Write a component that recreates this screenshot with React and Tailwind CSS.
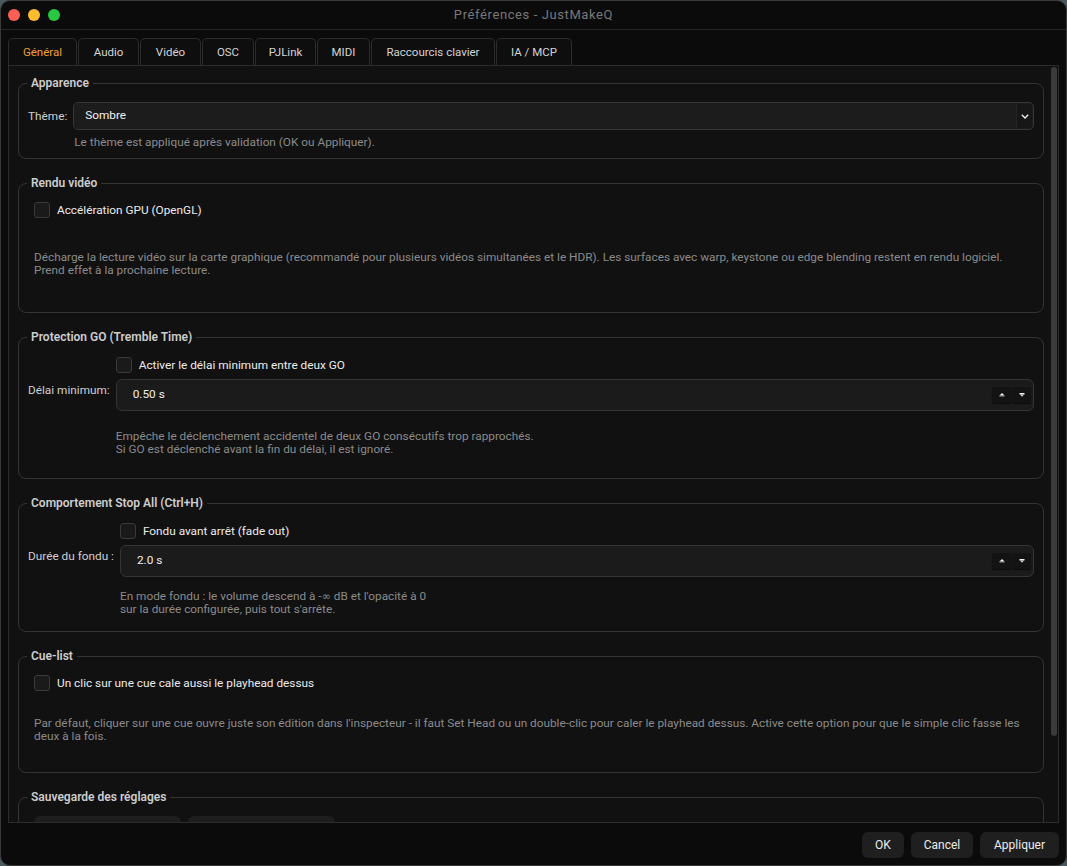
const tabs = [
  { label: "Général", w: "w-[69px]", active: true },
  { label: "Audio", w: "w-[61px]" },
  { label: "Vidéo", w: "w-[61px]" },
  { label: "OSC", w: "w-[52px]" },
  { label: "PJLink", w: "w-[61px]" },
  { label: "MIDI", w: "w-[53px]" },
  { label: "Raccourcis clavier", w: "w-[124px]" },
  { label: "IA / MCP", w: "w-[76px]" },
];

function Group({ title, className = "", children }) {
  return (
    <fieldset className={`border border-[#343434] rounded-[8px] px-[9px] ${className}`}>
      <legend className="-ml-px px-[4px] text-[12px] leading-[14px] font-semibold text-[#cdcdcd]">
        {title}
      </legend>
      {children}
    </fieldset>
  );
}

function Check({ label }) {
  return (
    <div className="flex items-center h-[18px] gap-[7px]">
      <span className="w-[16px] h-[16px] rounded-[3px] border border-[#3a3a3a] bg-[#1a1a1a]" />
      <span className="text-[11.8px] leading-[13px] text-[#ececec]">{label}</span>
    </div>
  );
}

function Hint({ children, className = "" }) {
  return <p className={`text-[11.8px] leading-[13px] text-[#8b8b8b] ${className}`}>{children}</p>;
}

function SpinBtn({ up }) {
  return (
    <span className="w-[19px] h-[16px] bg-[#131313] rounded-[2px] shadow-[0_1px_1px_rgba(0,0,0,0.6)] flex items-center justify-center">
      <svg width="6" height="4" viewBox="0 0 6 4">
        {up ? (
          <>
            <path d="M1 2 L3 0 L5 2 Z" fill="#f2f2f2" />
            <rect x="0.5" y="2" width="5" height="1.5" fill="#9a9a9a" />
          </>
        ) : (
          <>
            <rect x="0.5" y="0" width="5" height="1.5" fill="#f2f2f2" />
            <path d="M1 1.5 L3 3.8 L5 1.5 Z" fill="#d0d0d0" />
          </>
        )}
      </svg>
    </span>
  );
}

function Spin({ value }) {
  return (
    <div className="h-[32px] rounded-[6px] border border-[#343434] bg-[#1b1b1b] flex items-center pl-[16px] pr-[2px]">
      <span className="flex-1 text-[11.8px] text-[#f0f0f0]">{value}</span>
      <div className="flex gap-px">
        <SpinBtn up />
        <SpinBtn />
      </div>
    </div>
  );
}

export default function App() {
  return (
    <div className="w-[1067px] h-[866px] bg-[#4a5a5e] font-['Roboto',sans-serif]">
      <div className="w-full h-full rounded-[10px] border border-[#3a3a3a] bg-[#0b0b0b] flex flex-col overflow-hidden">
        {/* title bar */}
        <div className="h-[29px] shrink-0 relative flex items-center border-b border-[#262626]">
          <div className="flex gap-[8px] pl-[7px]">
            <span className="w-[12px] h-[12px] rounded-full bg-[#ff5f57]" />
            <span className="w-[12px] h-[12px] rounded-full bg-[#febc2e]" />
            <span className="w-[12px] h-[12px] rounded-full bg-[#28c840]" />
          </div>
          <div className="absolute inset-0 flex items-center justify-center text-[13px] tracking-[0.6px] text-[#787878]">
            Préférences - JustMakeQ
          </div>
        </div>

        {/* tabs */}
        <div className="flex gap-px pl-[7px] mt-[8px] h-[27px] shrink-0">
          {tabs.map((t) => (
            <div
              key={t.label}
              className={`${t.w} h-[28px] rounded-t-[5px] border border-b-0 border-[#2c2c2c] bg-[#0e0e0e] flex items-center justify-center text-[11.5px] ${t.active ? "text-[#f0a030]" : "text-[#d4d4d4]"}`}
            >
              {t.label}
            </div>
          ))}
        </div>

        {/* pane */}
        <div className="mx-[7px] h-[758px] shrink-0 border border-[#2c2c2c] bg-[#111111] flex overflow-hidden">
          <div className="flex-1 pl-[9px] pt-[10px] flex flex-col gap-[17px]">
            <Group title="Apparence" className="pb-[9px] shrink-0">
              <div className="pt-[12px] grid grid-cols-[auto_1fr] gap-x-[6px]">
                <span className="text-[11.8px] leading-[13px] text-[#cfcfcf] self-center">Thème:</span>
                <div className="h-[28px] rounded-[5px] border border-[#363636] bg-[#1c1c1c] flex items-center pl-[11px] pr-px">
                  <span className="flex-1 text-[11.8px] text-[#f2f2f2]">Sombre</span>
                  <span className="w-[16px] h-[24px] bg-[#171717] rounded-r-[4px] border-l border-[#262626] flex items-center justify-center">
                    <svg width="8" height="5" viewBox="0 0 8 5">
                      <path d="M0.8 0.8 L4 4 L7.2 0.8" fill="none" stroke="#f4f4f4" strokeWidth="1.3" />
                    </svg>
                  </span>
                </div>
                <span />
                <Hint className="mt-[6px] pl-px">Le thème est appliqué après validation (OK ou Appliquer).</Hint>
              </div>
            </Group>

            <Group title="Rendu vidéo" className="pb-[35px] shrink-0">
              <div className="pt-[11px] pl-[6px]">
                <Check label="Accélération GPU (OpenGL)" />
                <Hint className="mt-[32px]">
                  Décharge la lecture vidéo sur la carte graphique (recommandé pour plusieurs vidéos simultanées et le HDR). Les surfaces avec warp, keystone ou edge blending restent en rendu logiciel.
                  <br />
                  Prend effet à la prochaine lecture.
                </Hint>
              </div>
            </Group>

            <Group title="Protection GO (Tremble Time)" className="pb-[22px] shrink-0">
              <div className="pt-[12px] grid grid-cols-[auto_1fr] gap-x-[6px]">
                <span />
                <Check label="Activer le délai minimum entre deux GO" />
                <span className="mt-[10px] text-[11.8px] leading-[13px] text-[#cfcfcf]">Délai minimum:</span>
                <div className="mt-[5px]">
                  <Spin value="0.50 s" />
                </div>
                <span />
                <Hint className="mt-[19px]">
                  Empêche le déclenchement accidentel de deux GO consécutifs trop rapprochés.
                  <br />
                  Si GO est déclenché avant la fin du délai, il est ignoré.
                </Hint>
              </div>
            </Group>

            <Group title="Comportement Stop All (Ctrl+H)" className="pb-[15px] shrink-0">
              <div className="pt-[12px] grid grid-cols-[auto_1fr] gap-x-[6px]">
                <span />
                <Check label="Fondu avant arrêt (fade out)" />
                <span className="mt-[10px] text-[11.8px] leading-[13px] text-[#cfcfcf]">Durée du fondu :</span>
                <div className="mt-[5px]">
                  <Spin value="2.0 s" />
                </div>
                <span />
                <Hint className="mt-[13px]">
                  En mode fondu : le volume descend à -<span className="font-['DejaVu_Sans',sans-serif] text-[11px]">∞</span> dB et l'opacité à 0
                  <br />
                  sur la durée configurée, puis tout s'arrête.
                </Hint>
              </div>
            </Group>

            <Group title="Cue-list" className="pb-[29px] shrink-0">
              <div className="pt-[11px] pl-[6px]">
                <Check label="Un clic sur une cue cale aussi le playhead dessus" />
                <Hint className="mt-[25px]">
                  Par défaut, cliquer sur une cue ouvre juste son édition dans l'inspecteur - il faut Set Head ou un double-clic pour caler le playhead dessus. Active cette option pour que le simple clic fasse les deux à la fois.
                </Hint>
              </div>
            </Group>

            <Group title="Sauvegarde des réglages" className="pb-[20px] shrink-0">
              <div className="pt-[12px] pl-[6px] flex gap-[7px]">
                <span className="w-[147px] h-[26px] rounded-[6px] bg-[#1e1e1e]" />
                <span className="w-[147px] h-[26px] rounded-[6px] bg-[#1e1e1e]" />
              </div>
            </Group>
          </div>
          {/* scrollbar */}
          <div className="w-[14px] shrink-0 pt-px pl-[7px] pr-px">
            <div className="w-[6px] h-[669px] rounded-[3px] bg-[#3a3a3a]" />
          </div>
        </div>

        {/* buttons */}
        <div className="flex-1 flex justify-end items-start gap-[7px] pt-[9px] pr-[7px]">
          <button className="w-[42px] h-[26px] rounded-[6px] bg-[#1f1f1f] text-[12px] text-[#ececec]">OK</button>
          <button className="w-[62px] h-[26px] rounded-[6px] bg-[#1f1f1f] text-[12px] text-[#ececec]">Cancel</button>
          <button className="w-[79px] h-[26px] rounded-[6px] bg-[#1f1f1f] text-[12px] text-[#ececec]">Appliquer</button>
        </div>
      </div>
    </div>
  );
}
